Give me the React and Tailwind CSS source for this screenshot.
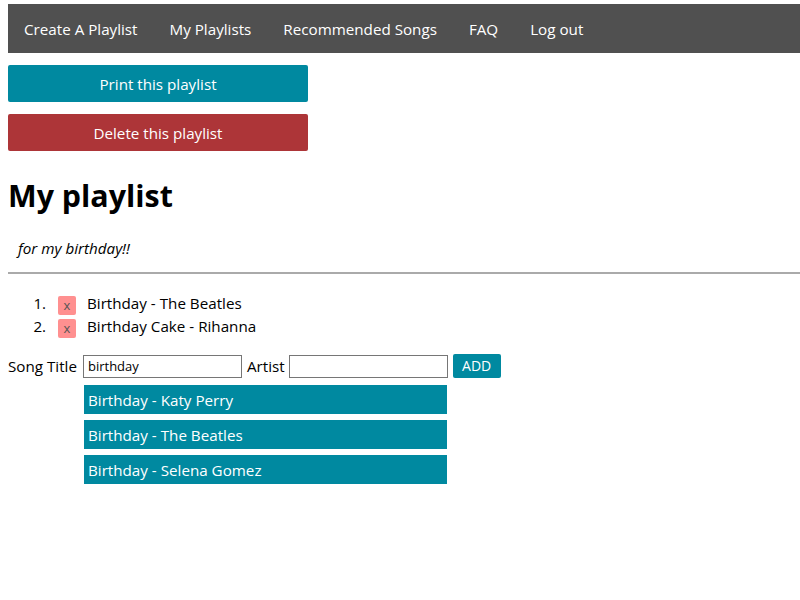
const navItems = ['Create A Playlist', 'My Playlists', 'Recommended Songs', 'FAQ', 'Log out']

const playlist = ['Birthday - The Beatles', 'Birthday Cake - Rihanna']

const suggestions = ['Birthday - Katy Perry', 'Birthday - The Beatles', 'Birthday - Selena Gomez']

export default function App() {
  return (
    <div className="min-h-[600px] w-[800px] overflow-hidden bg-white pl-2 pt-1 text-[15.2px] leading-[22px] text-black" style={{ fontFamily: '"Open Sans", "Noto Sans", sans-serif' }}>
      <nav className="flex h-[49px] w-[800px] items-center bg-[#505050] pl-4 text-white">
        {navItems.map((item) => (
          <a key={item} className="mr-8 whitespace-nowrap">{item}</a>
        ))}
      </nav>

      <button className="mt-3 block h-[37px] w-[300px] rounded-[2px] bg-[#0089a0] text-white">Print this playlist</button>
      <button className="mt-3 block h-[37px] w-[300px] rounded-[2px] bg-[#ad3538] text-white">Delete this playlist</button>

      <h1 className="mt-[25px] text-[30.4px] font-bold leading-[40px]">My playlist</h1>

      <p className="mt-[21px] pl-[10px] italic">for my birthday!!</p>

      <hr className="mt-[13px] border-t-2 border-[#aaa]" />

      <ol className="mt-[18px] list-decimal pl-[42px]">
        {playlist.map((song) => (
          <li key={song} className="h-[23px] pl-[8px] leading-[23px]">
            <span className="mr-[11px] inline-flex h-[19px] w-[18px] items-center justify-center rounded-[2px] bg-[#ff9090] align-[-1px] text-[13px] leading-none text-[#555]">x</span>
            <span>{song}</span>
          </li>
        ))}
      </ol>

      <div className="mt-[16px] flex items-center">
        <label>Song Title</label>
        <input className="ml-[6px] h-[23px] w-[159px] border border-[#767676] px-1 text-[13px]" defaultValue="birthday" />
        <label className="ml-[5px]">Artist</label>
        <input className="ml-[4px] h-[23px] w-[159px] border border-[#767676] px-1 text-[13px]" />
        <button className="ml-[5px] h-[24px] w-[48px] rounded-[2px] bg-[#0089a0] text-[14px] text-white">ADD</button>
      </div>

      <div className="ml-[76px] mt-[7px] flex w-[363px] flex-col gap-[6px]">
        {suggestions.map((s) => (
          <div key={s} className="flex h-[29px] items-center bg-[#0089a0] pl-1 text-white">{s}</div>
        ))}
      </div>
    </div>
  )
}
